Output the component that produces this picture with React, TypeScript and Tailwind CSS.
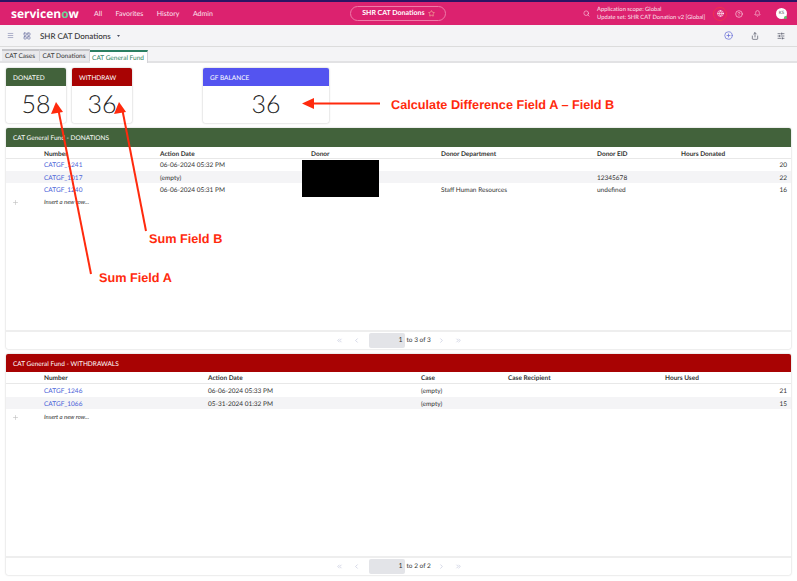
import React from "react";
import { Search, Globe, CircleHelp, Bell, Menu, LayoutGrid, ChevronsLeft, ChevronLeft, ChevronRight, ChevronsRight, Star, CirclePlus, Share, SlidersHorizontal, Plus } from "lucide-react";

const donationCols = "grid grid-cols-[38px_116px_151px_130px_156px_84px_1fr]";
const withdrawCols = "grid grid-cols-[38px_164px_213px_87px_157px_1fr]";

function Stat({ title, value, color, width }: { title: string; value: string; color: string; width: string }) {
  return (
    <div className={`${width} h-[55px] flex flex-col rounded-[2px] shadow-[0_0_2px_rgba(0,0,0,0.3)] bg-white`}>
      <div className={`${color} h-[18px] shrink-0 pl-[7px] pt-[3px] flex items-center text-white text-[6.5px] rounded-t-[2px]`}>{title}</div>
      <div className="flex-1 flex items-center justify-center text-[25px] font-light text-[#222]">{value}</div>
    </div>
  );
}

function Pager({ text }: { text: string }) {
  return (
    <div className="h-[19px] shrink-0 flex items-center justify-center text-[6.5px] text-[#333] border-t-2 border-[#eee]">
      <ChevronsLeft size={7} className="text-[#b9bdd6]" />
      <ChevronLeft size={7} className="text-[#b9bdd6] ml-[10px]" />
      <div className="w-[36px] h-[15px] bg-[#e3e4e8] rounded-[2px] ml-[9px] flex items-center justify-end pr-[2px] text-[7px]">1</div>
      <span className="ml-[2px] w-[24px] whitespace-nowrap">{text}</span>
      <ChevronRight size={7} className="text-[#b9bdd6] ml-[7px]" />
      <ChevronsRight size={7} className="text-[#b9bdd6] ml-[10px]" />
    </div>
  );
}

function Insert({ shift }: { shift?: boolean }) {
  return (
    <div className={`h-[15px] flex items-center text-[6px] italic text-[#333] ${shift ? "pt-[2px]" : ""}`}>
      <div className="w-[38px] pl-[6px]"><Plus size={7} className="text-[#bbb]" /></div>
      Insert a new row...
    </div>
  );
}

const link = "text-[#4a62d8]";

export default function App() {
  return (
    <div className="relative w-[797px] h-[581px] overflow-hidden bg-white font-['Lato',sans-serif] text-[#333] [text-rendering:geometricPrecision]">
      <div className="h-[2px] bg-[#2b1463]" />
      <header className="h-[23px] bg-[#dc226f] text-white flex items-center pl-[11px] pr-[10px]">
        <span className="text-[12px] font-bold w-[68px] font-['Open_Sans',sans-serif] leading-none whitespace-nowrap">servicen<span className="text-[#6fcf97]">o</span>w</span>
        <nav className="flex items-center gap-[13.5px] text-[7px] ml-[15px] pt-[1px] text-[#fbe3ee]">
          <span>All</span><span>Favorites</span><span>History</span><span>Admin</span>
        </nav>
        <div className="ml-[137.5px] w-[96px] h-[15px] border border-[#ee7aa8] rounded-full flex items-center justify-center gap-[3px] text-[7px] font-bold">
          SHR CAT Donations <Star size={7} className="text-[#f7c6a0]" />
        </div>
        <Search size={7} className="ml-auto text-[#fbd3e3]" />
        <div className="ml-[7px] w-[111px] text-[5.8px] leading-[7.5px] text-[#fbe3ee] whitespace-nowrap">
          <div>Application scope: Global</div>
          <div>Update set: SHR CAT Donation v2 [Global]</div>
        </div>
        <div className="ml-[5px] w-[14px] h-[14px] rounded-full border border-[#f0324e] flex items-center justify-center"><Globe size={7} /></div>
        <CircleHelp size={8} className="ml-[8px] text-[#fbd3e3]" />
        <Bell size={7} className="ml-[11px] text-[#fbd3e3]" />
        <div className="relative ml-[15px] w-[11px] h-[11px] rounded-full bg-white text-[#555] text-[4.5px] flex items-center justify-center">
          KS
          <span className="absolute right-0 bottom-0 w-[3px] h-[3px] rounded-full bg-[#5cc46a]" />
        </div>
      </header>
      <div className="h-[22px] bg-[#f4f4f6] border-b border-[#dcdcdc] flex items-center pl-[7px] pr-[12px] text-[#4a4d5e]">
        <Menu size={7} className="text-[#7a7fa8]" />
        <LayoutGrid size={8} className="ml-[9px] text-[#6a6fa0]" />
        <span className="ml-[9px] text-[8px] text-[#333] font-medium">SHR CAT Donations</span>
        <svg className="ml-[6px]" width="3" height="2" viewBox="0 0 3 2"><polygon points="0,0 3,0 1.5,2" fill="#4a4d5e" /></svg>
        <CirclePlus size={9} className="ml-auto text-[#6a70d8]" />
        <Share size={8} className="ml-[18px]" />
        <SlidersHorizontal size={8} className="ml-[18px]" />
      </div>
      <div className="h-[16px] bg-[#f4f4f6] border-b-2 border-[#e2e2e4] flex items-end pl-[1.5px] text-[6.5px]">
        <div className="w-[38px] h-[12px] pt-[2px] flex items-center justify-center bg-[#e9e9ec] border-t-2 border-[#c4c4c8] border-r border-r-[#d4d4d8]">CAT Cases</div>
        <div className="w-[50px] h-[12px] pt-[2px] flex items-center justify-center bg-[#e9e9ec] border-t-2 border-[#c4c4c8] border-r border-r-[#d4d4d8]">CAT Donations</div>
        <div className="w-[58px] h-[13px] pt-[2px] -mb-[2px] flex items-center justify-center bg-white border-t-2 border-[#2a7f62] border-r border-r-[#d4d4d8] text-[#2a7f62] whitespace-nowrap">CAT General Fund</div>
      </div>
      <main className="pl-[6px] pt-[5px]">
        <div className="flex">
          <Stat title="DONATED" value="58" color="bg-[#42623b]" width="w-[60px]" />
          <Stat title="WITHDRAW" value="36" color="bg-[#a80303]" width="w-[60px] ml-[6px]" />
          <Stat title="GF BALANCE" value="36" color="bg-[#5454f0]" width="w-[126px] ml-[71px]" />
        </div>
        <section className="mt-[5px] h-[221px] w-[785px] flex flex-col rounded-[2px] shadow-[0_0_2px_rgba(0,0,0,0.25)] text-[6.5px]">
          <div className="h-[19px] shrink-0 bg-[#42623b] text-white flex items-center pl-[7px] pt-[3px] text-[6.5px] rounded-t-[2px]">CAT General Fund - DONATIONS</div>
          <div className={`${donationCols} h-[12px] pt-[3px] items-center border-b border-[#e8e8e8] font-bold`}>
            <span /><span>Number</span><span>Action Date</span><span>Donor</span><span>Donor Department</span><span>Donor EID</span><span>Hours Donated</span>
          </div>
          <div className={`${donationCols} h-[12px] pt-[2px] items-center`}>
            <span /><span className={link}>CATGF_1241</span><span>06-06-2024 05:32 PM</span><span /><span /><span /><span className="text-right pr-[4px]">20</span>
          </div>
          <div className={`${donationCols} h-[12px] pt-[3px] items-center bg-[#f4f4f6]`}>
            <span /><span className={link}>CATGF_1017</span><span>(empty)</span><span /><span /><span>12345678</span><span className="text-right pr-[4px]">22</span>
          </div>
          <div className={`${donationCols} h-[12px] pt-[3px] items-center`}>
            <span /><span className={link}>CATGF_1240</span><span>06-06-2024 05:31 PM</span><span /><span>Staff Human Resources</span><span>undefined</span><span className="text-right pr-[4px]">16</span>
          </div>
          <Insert />
          <div className="flex-1" />
          <Pager text="to 3 of 3" />
        </section>
        <section className="mt-[5px] h-[221px] w-[785px] flex flex-col rounded-[2px] shadow-[0_0_2px_rgba(0,0,0,0.25)] text-[6.5px]">
          <div className="h-[18px] shrink-0 bg-[#a80303] text-white flex items-center pl-[7px] pt-[4px] text-[6.5px] rounded-t-[2px]">CAT General Fund - WITHDRAWALS</div>
          <div className={`${withdrawCols} h-[12px] pt-[2px] items-center border-b border-[#e8e8e8] font-bold`}>
            <span /><span>Number</span><span>Action Date</span><span>Case</span><span>Case Recipient</span><span>Hours Used</span>
          </div>
          <div className={`${withdrawCols} h-[13px] pt-[2px] items-center`}>
            <span /><span className={link}>CATGF_1246</span><span>06-06-2024 05:33 PM</span><span>(empty)</span><span /><span className="text-right pr-[4px]">21</span>
          </div>
          <div className={`${withdrawCols} h-[12px] pt-[3px] items-center bg-[#f4f4f6]`}>
            <span /><span className={link}>CATGF_1066</span><span>05-31-2024 01:32 PM</span><span>(empty)</span><span /><span className="text-right pr-[4px]">15</span>
          </div>
          <Insert shift />
          <div className="flex-1" />
          <Pager text="to 2 of 2" />
        </section>
      </main>

      {/* Redaction and annotations laid over the screenshot */}
      <div className="absolute left-[302px] top-[160px] w-[77px] h-[37px] bg-black" />
      <svg className="absolute left-0 top-0 pointer-events-none" width="797" height="581" viewBox="0 0 797 581">
        <g stroke="#ff2a0d" strokeWidth="2" fill="#ff2a0d">
          <line x1="91" y1="274" x2="58" y2="108" />
          <polygon points="56,102 51,114 63,112" strokeWidth="0" />
          <line x1="146" y1="231" x2="122" y2="108" />
          <polygon points="119,102 114,114 126,112" strokeWidth="0" />
          <line x1="380" y1="103.5" x2="308" y2="103.5" />
          <polygon points="302,103.5 314,98 314,109" strokeWidth="0" />
        </g>
      </svg>
      <span className="absolute left-[391px] top-[96px] text-[12.7px] font-bold text-[#ff2a0d] font-['Liberation_Sans',sans-serif] whitespace-nowrap">Calculate Difference Field A – Field B</span>
      <span className="absolute left-[149px] top-[230px] text-[12.7px] font-bold text-[#ff2a0d] font-['Liberation_Sans',sans-serif] whitespace-nowrap">Sum Field B</span>
      <span className="absolute left-[99px] top-[269px] text-[12.7px] font-bold text-[#ff2a0d] font-['Liberation_Sans',sans-serif] whitespace-nowrap">Sum Field A</span>
    </div>
  );
}
